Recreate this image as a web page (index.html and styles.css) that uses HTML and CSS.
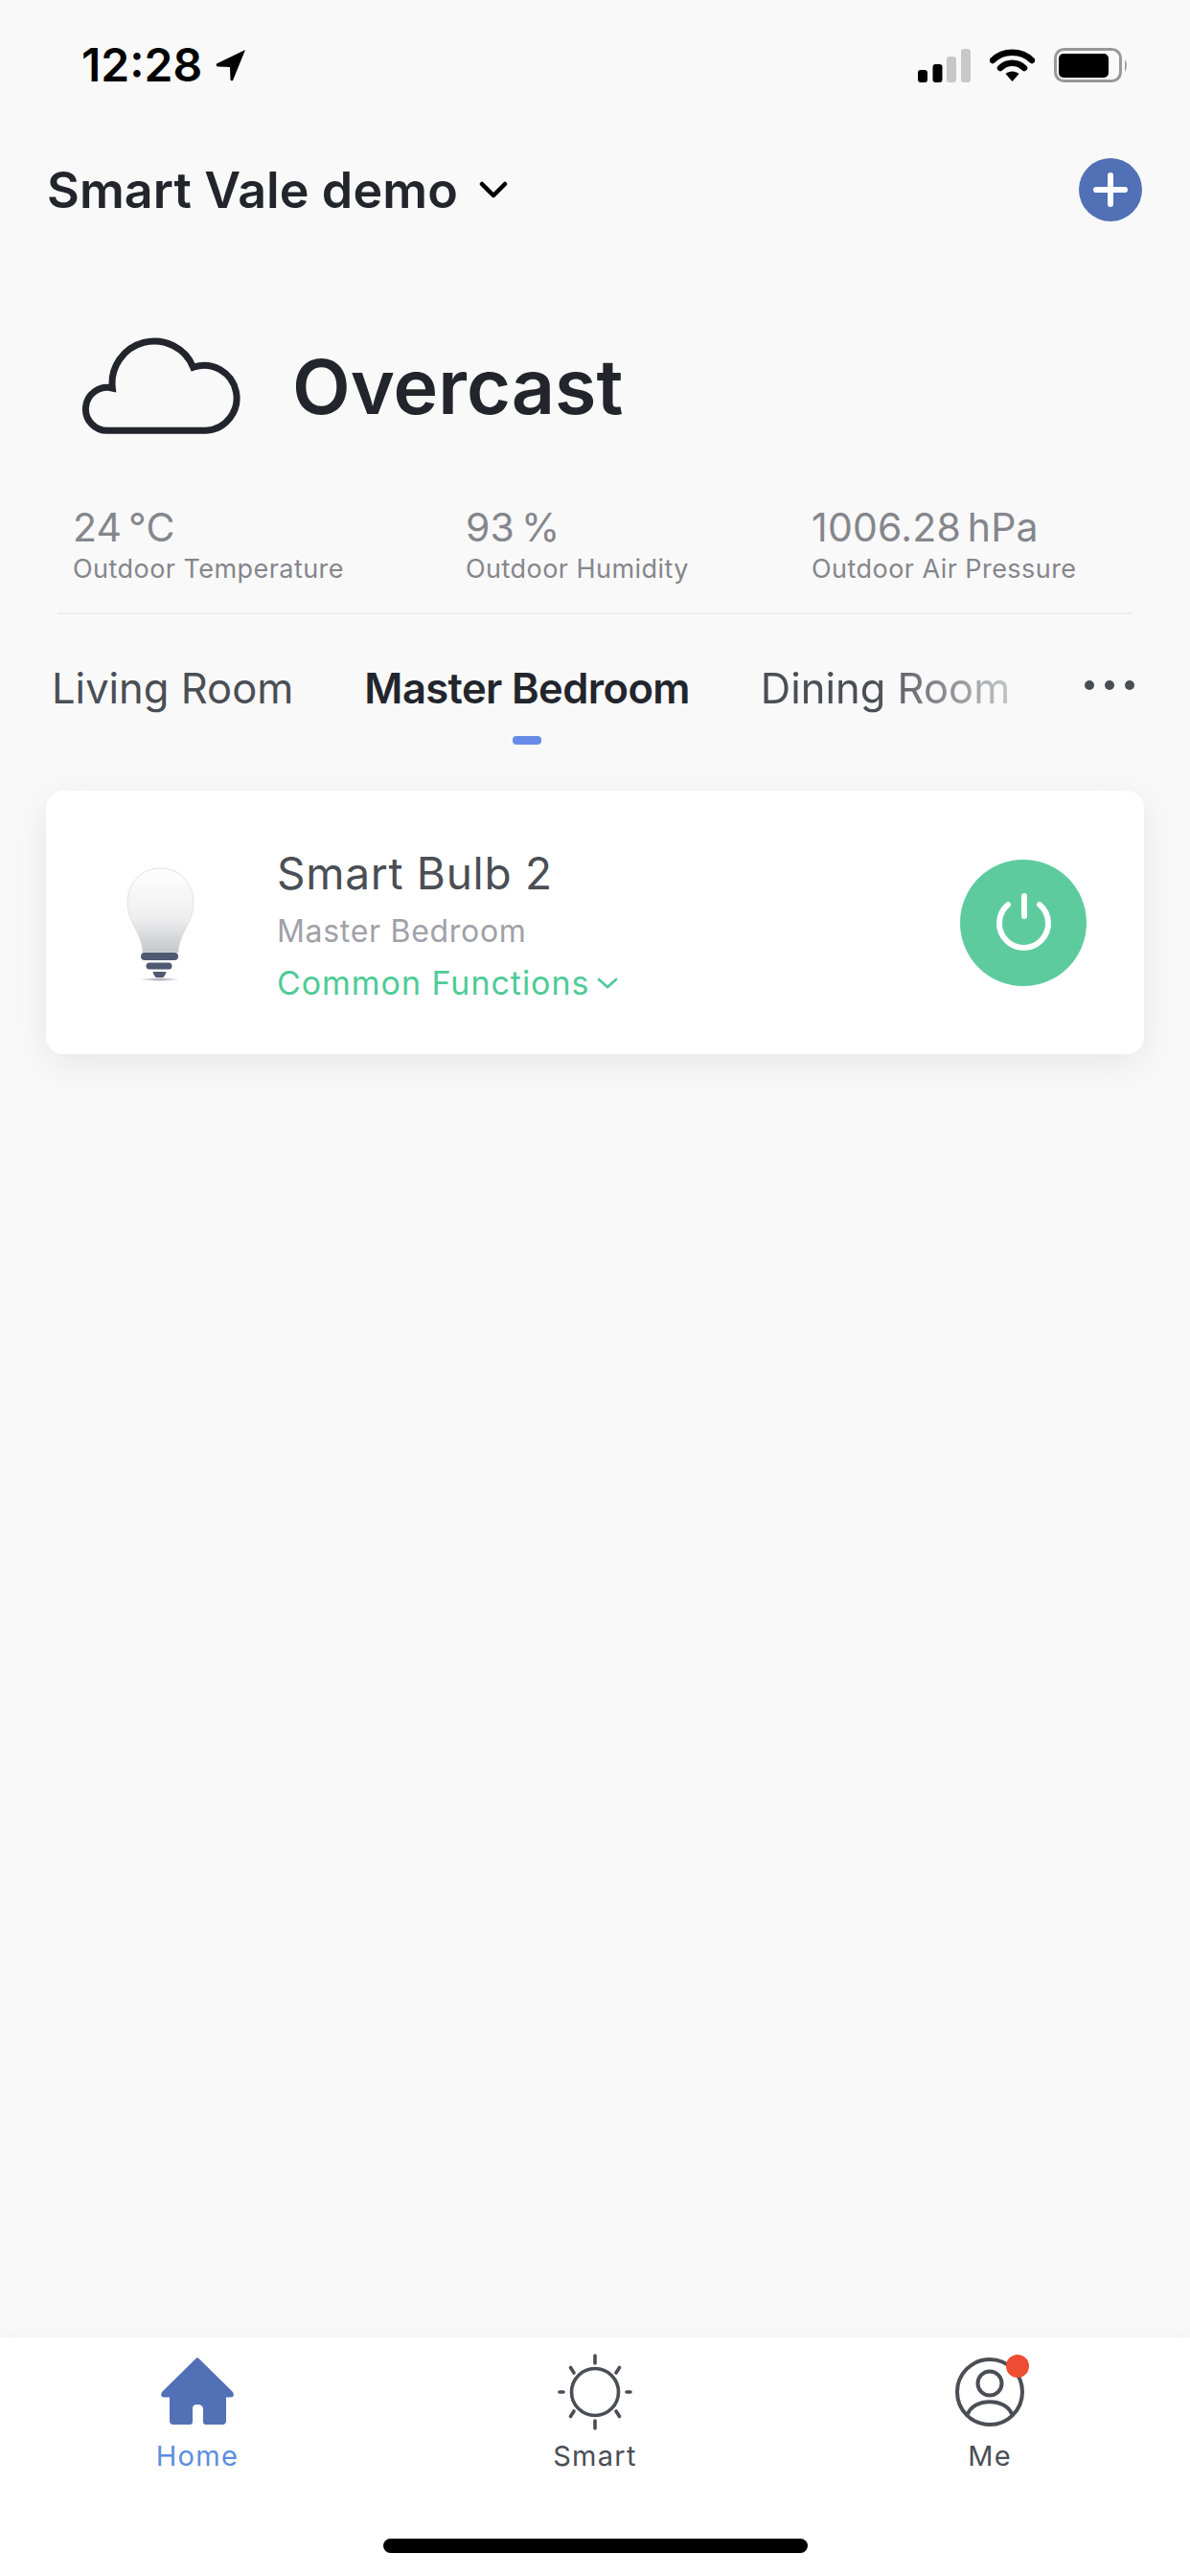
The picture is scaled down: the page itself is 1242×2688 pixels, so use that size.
FILE: index.html
```html
<!DOCTYPE html>
<html lang="en">
<head>
    <meta charset="UTF-8">
    <meta name="viewport" content="width=device-width, initial-scale=1.0">
    <title>Smart Vale demo</title>
    <link rel="stylesheet" href="styles.css">
</head>
<body>
    <div class="screen">
        <div class="status-bar">
            <span class="clock">12:28</span>
            <svg class="location" viewBox="0 0 32 34" width="32" height="34">
                <path d="M31 1 L1 15.500 Q0 18 2.500 18.500 L15 19 L15.500 32 Q16 34 18 33 Z" fill="#000"/>
            </svg>
            <div class="status-icons">
                <svg viewBox="0 0 55 35" width="55" height="35">
                    <rect x="0" y="22" width="10" height="13" rx="3" fill="#000"/>
                    <rect x="15.500" y="16" width="10" height="19" rx="3" fill="#000"/>
                    <rect x="30" y="8" width="10" height="27" rx="3" fill="#c8c8c8"/>
                    <rect x="45" y="0" width="10" height="35" rx="3" fill="#c8c8c8"/>
                </svg>
                <svg viewBox="0 0 47 36" width="47" height="36">
                    <path d="M3 13 C14 2 33 2 44 13" fill="none" stroke="#000" stroke-width="6.500" stroke-linecap="round"/>
                    <path d="M11 21 C18 14 29 14 36 21" fill="none" stroke="#000" stroke-width="6.500" stroke-linecap="round"/>
                    <path d="M16.500 27 C20 23.500 27 23.500 30.500 27 L23.500 35 Z" fill="#000"/>
                </svg>
                <svg viewBox="0 0 78 36" width="78" height="36">
                    <rect x="1.500" y="1.500" width="68" height="33" rx="9" fill="none" stroke="#999" stroke-width="3"/>
                    <rect x="5" y="6" width="52" height="25" rx="5" fill="#000"/>
                    <path d="M74 12 Q78 18 74 25 Z" fill="#999"/>
                </svg>
            </div>
        </div>

        <header class="home-header">
            <span class="home-name">Smart Vale demo</span>
            <svg class="home-caret" viewBox="0 0 30 18" width="30" height="18">
                <path d="M3 3 L15 15 L27 3" fill="none" stroke="#000" stroke-width="4.500" stroke-linecap="round" stroke-linejoin="round"/>
            </svg>
            <svg class="add-btn" viewBox="0 0 66 66" width="66" height="66">
                <circle cx="33" cy="33" r="33" fill="#5270b5"/>
                <path d="M33 18 V48 M18 33 H48" stroke="#fff" stroke-width="6" stroke-linecap="round"/>
            </svg>
        </header>

        <section class="weather">
            <svg viewBox="0 0 172 106" width="172" height="106">
                <path d="M29.300 99.300 H131 A34 34 0 1 0 117.700 33.300 A44 44 0 0 0 33.300 55 A22.500 22.500 0 1 0 29.300 99.300 Z" fill="none" stroke="#22252c" stroke-width="7" stroke-linejoin="miter"/>
            </svg>
            <span class="weather-text">Overcast</span>
        </section>

        <section class="stats">
            <div>
                <div class="stat-value">24 °C</div>
                <div class="stat-label">Outdoor Temperature</div>
            </div>
            <div>
                <div class="stat-value">93 %</div>
                <div class="stat-label">Outdoor Humidity</div>
            </div>
            <div>
                <div class="stat-value">1006.28 hPa</div>
                <div class="stat-label">Outdoor Air Pressure</div>
            </div>
        </section>
        <div class="divider"></div>

        <nav class="rooms">
            <div class="room">Living Room</div>
            <div class="room active">Master Bedroom<span class="room-mark"></span></div>
            <div class="room faded">Dining Room</div>
            <svg class="room-more" viewBox="0 0 52 10" width="52" height="10">
                <circle cx="5" cy="5" r="5" fill="#4a4e55"/>
                <circle cx="26" cy="5" r="5" fill="#4a4e55"/>
                <circle cx="47" cy="5" r="5" fill="#4a4e55"/>
            </svg>
        </nav>

        <main class="devices">
            <div class="device-card">
                <svg class="bulb" viewBox="0 0 71 120" width="71" height="120">
                    <defs>
                        <linearGradient id="bulbGlass" x1="0" y1="0" x2="0" y2="1">
                            <stop offset="0" stop-color="#ffffff"/>
                            <stop offset="0.6" stop-color="#eeeeef"/>
                            <stop offset="1" stop-color="#c4c5c9"/>
                        </linearGradient>
                        <radialGradient id="bulbFloor">
                            <stop offset="0" stop-color="#9a9da5"/>
                            <stop offset="1" stop-color="#fff"/>
                        </radialGradient>
                    </defs>
                    <path d="M35.500 1 C16 1 1 16 1 37 C1 54 12 66 15 78 Q17 84 17 89 H54 Q54 84 56 78 C59 66 70 54 70 37 C70 16 55 1 35.500 1 Z" fill="url(#bulbGlass)" stroke="#e2e2e4" stroke-width="1"/>
                    <rect x="15" y="89" width="39" height="8" rx="4" fill="#4f5a70"/>
                    <rect x="20.500" y="99.500" width="27" height="7" rx="3.500" fill="#4f5a70"/>
                    <path d="M27.500 109 H41.500 Q40 116 34.500 116 Q29 116 27.500 109 Z" fill="#4f5a70"/>
                    <ellipse cx="34.500" cy="117" rx="21" ry="2" fill="url(#bulbFloor)"/>
                </svg>
                <div class="device-info">
                    <div class="device-name">Smart Bulb 2</div>
                    <div class="device-room">Master Bedroom</div>
                    <div class="device-functions">
                        Common Functions
                        <svg viewBox="0 0 22 12" width="22" height="12">
                            <path d="M2 2 L11 10 L20 2" fill="none" stroke="#4ecb97" stroke-width="2.800" stroke-linecap="round" stroke-linejoin="round"/>
                        </svg>
                    </div>
                </div>
                <svg class="power-btn" viewBox="0 0 132 132" width="132" height="132">
                    <circle cx="66" cy="66" r="66" fill="#5ecb9f"/>
                    <path d="M50 47 A25.500 25.500 0 1 0 83 47" fill="none" stroke="#fff" stroke-width="6" stroke-linecap="round"/>
                    <path d="M67 38 V59" stroke="#fff" stroke-width="6" stroke-linecap="round"/>
                </svg>
            </div>
        </main>

        <footer class="tabbar">
            <div class="tabs">
                <div class="tab tab-on">
                    <svg viewBox="0 0 80 74" width="80" height="74">
                        <path d="M38.500 2 Q40 0.500 41.500 2 L77 37 Q79.500 42 75 42.500 H70 V67 Q70 71 66 71 H49 Q46 71 46 68 V54 Q45 50 40 50 Q35 50 35 54 V68 Q35 71 32 71 H15 Q11 71 11 67 V42.500 H5 Q0.500 42 3 37 Z" fill="#5270b5"/>
                    </svg>
                    <span class="tab-label">Home</span>
                </div>
                <div class="tab">
                    <svg viewBox="0 0 80 80" width="80" height="80">
                        <circle cx="40" cy="40" r="24.500" fill="none" stroke="#4a4e55" stroke-width="3.600"/>
                        <path d="M40 2 V10 M40 70 V78 M3 40 H7 M73 40 H77 M14.500 14.500 L18 20 M65.500 14.500 L62 20 M14.500 65.500 L18 60 M65.500 65.500 L62 60" stroke="#4a4e55" stroke-width="3.600" stroke-linecap="round"/>
                    </svg>
                    <span class="tab-label">Smart</span>
                </div>
                <div class="tab">
                    <div class="tab-icon">
                        <svg viewBox="0 0 80 80" width="80" height="80">
                            <circle cx="40" cy="40" r="34" fill="none" stroke="#4a4e55" stroke-width="4"/>
                            <circle cx="40" cy="31" r="12.500" fill="none" stroke="#4a4e55" stroke-width="4"/>
                            <path d="M17 63 C23 46 57 46 63 63" fill="none" stroke="#4a4e55" stroke-width="4"/>
                        </svg>
                        <span class="tab-dot"></span>
                    </div>
                    <span class="tab-label">Me</span>
                </div>
            </div>
            <div class="home-bar"></div>
        </footer>
    </div>
</body>
</html>
```

FILE: styles.css
```css
* {
    box-sizing: border-box;
}
body {
    margin: 0;
    font-family: Inter, "Liberation Sans", sans-serif;
    background-color: #f9f9f9;
}
svg {
    display: block;
    flex: none;
}
.screen {
    width: 1242px;
    height: 2688px;
    display: flex;
    flex-direction: column;
    overflow: hidden;
}

/* status bar */
.status-bar {
    height: 92px;
    padding: 44px 64px 0 85px;
    display: flex;
    align-items: center;
}
.clock {
    font-size: 48px;
    font-weight: 600;
    line-height: 48px;
    color: #000;
}
.location {
    margin-left: 14px;
}
.status-icons {
    margin-left: auto;
    display: flex;
    align-items: center;
    gap: 20px;
}

/* home name row */
.home-header {
    margin-top: 73px;
    height: 66px;
    padding: 0 50px 0 49px;
    display: flex;
    align-items: center;
}
.home-name {
    font-size: 52px;
    font-weight: 600;
    letter-spacing: 0.1px;
    color: #22252c;
}
.home-caret {
    margin-left: 22px;
}
.add-btn {
    margin-left: auto;
}

/* weather */
.weather {
    margin-top: 119px;
    padding-left: 84px;
    display: flex;
    align-items: center;
    gap: 49px;
}
.weather-text {
    font-size: 79px;
    font-weight: 600;
    color: #22252c;
}
.stats {
    margin-top: 72px;
    padding-left: 76px;
    display: grid;
    grid-template-columns: 410px 361px 1fr;
}
.stat-value {
    font-size: 41px;
    line-height: 44px;
    letter-spacing: 0.2px;
    word-spacing: -5px;
    color: #85868c;
}
.stat-label {
    margin-top: 6px;
    font-size: 27px;
    line-height: 32px;
    letter-spacing: 0.45px;
    color: #85868c;
}
.divider {
    margin: 29px 60px 0;
    height: 2px;
    background-color: #ececec;
}

/* room tabs */
.rooms {
    margin: 47px 0 46px;
    padding: 0 58px 0 54px;
    height: 91px;
    display: flex;
    gap: 74px;
}
.room {
    font-size: 43.5px;
    line-height: 60px;
    white-space: nowrap;
    color: #4a4e55;
    display: flex;
    flex-direction: column;
    align-items: center;
}
.room.active {
    font-weight: 600;
    letter-spacing: -0.6px;
    color: #22252c;
}
.room.faded {
    -webkit-mask-image: linear-gradient(to right, #000 45%, rgba(0, 0, 0, 0.3) 100%);
    mask-image: linear-gradient(to right, #000 45%, rgba(0, 0, 0, 0.3) 100%);
}
.room-mark {
    margin-top: 20px;
    width: 30px;
    height: 9px;
    border-radius: 4px;
    background-color: #668ce8;
}
.room-more {
    margin: 22px 0 0 auto;
}

/* device list */
.devices {
    flex: 1;
    padding: 0 48px;
}
.device-card {
    height: 275px;
    padding: 0 60px 0 84px;
    display: flex;
    align-items: center;
    background-color: #fff;
    border-radius: 18px;
    box-shadow: 0 10px 40px rgba(0, 0, 0, 0.08);
}
.bulb {
    margin-top: 4px;
}
.device-info {
    margin: 6px 0 0 86px;
}
.device-name {
    font-size: 46px;
    line-height: 56px;
    letter-spacing: 0.7px;
    color: #4a4e55;
}
.device-room {
    margin-top: 11px;
    font-size: 32px;
    line-height: 44px;
    letter-spacing: 0.7px;
    color: #a0a1a8;
}
.device-functions {
    margin-top: 10px;
    font-size: 34px;
    line-height: 44px;
    letter-spacing: 0.95px;
    color: #4ecb97;
    display: flex;
    align-items: center;
    gap: 8px;
}
.power-btn {
    margin-left: auto;
}

/* bottom tab bar */
.tabbar {
    height: 249px;
    background-color: #fff;
    box-shadow: 0 -4px 16px rgba(0, 0, 0, 0.03);
}
.tabs {
    padding-top: 17px;
    display: grid;
    grid-template-columns: 412px 418px 406px;
}
.tab {
    display: flex;
    flex-direction: column;
    align-items: center;
    height: 143px;
}
.tab > svg,
.tab-icon {
    height: 80px;
}
.tab-icon {
    position: relative;
}
.tab-dot {
    position: absolute;
    top: 1px;
    right: -1px;
    width: 24px;
    height: 24px;
    border-radius: 50%;
    background-color: #ef4c34;
}
.tab-label {
    margin-top: 7px;
    font-size: 29px;
    line-height: 40px;
    letter-spacing: 1.3px;
    color: #4a4e55;
}
.tab-on .tab-label {
    color: #5b8de0;
}
.home-bar {
    width: 443px;
    height: 15px;
    margin: 50px auto 0;
    border-radius: 8px;
    background-color: #000;
}
```
